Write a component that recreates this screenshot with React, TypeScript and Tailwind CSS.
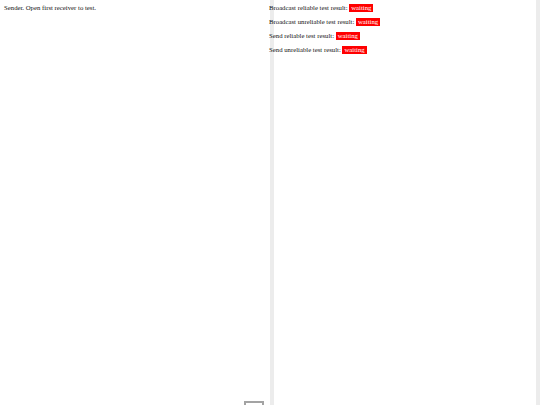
const results = [
  'Broadcast reliable test result:',
  'Broadcast unreliable test result:',
  'Send reliable test result:',
  'Send unreliable test result:',
]

export default function App() {
  return (
    <div className="flex h-[405px] w-[540px] overflow-hidden bg-white font-['Liberation_Serif',serif] text-[6.75px] leading-[7.7px] text-[#111]">
      {/* sender pane */}
      <div className="flex w-[266px] shrink-0 flex-col justify-between">
        <p className="px-[4px] pt-[3.5px]">Sender. Open first receiver to test.</p>
        <div className="mr-[2px] flex justify-end">
          <div className="h-[4px] w-[20px] border-x-2 border-t-2 border-[#a3a3a3] bg-white" />
        </div>
      </div>

      {/* receiver pane */}
      <div className="flex flex-1 bg-[linear-gradient(to_right,white_4px,#ececec_4px,#ececec_8px,white_8px)]">
        <div className="flex-1 px-[3px] pt-[3.5px]">
          {results.map((label) => (
            <p key={label} className="mb-[6.3px]">
              {label}{' '}
              <span className="inline-block bg-[#ff0000] px-[2px] leading-[8px] text-white">waiting</span>
            </p>
          ))}
        </div>
        <div className="w-[4px] shrink-0 bg-[#ececec]" />
      </div>
    </div>
  )
}
